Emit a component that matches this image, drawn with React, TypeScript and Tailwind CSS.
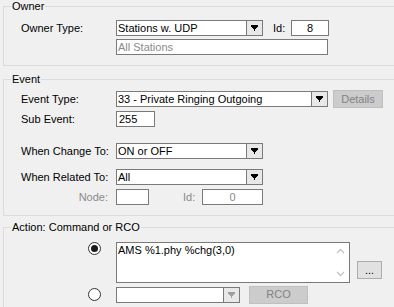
import React from "react";

const Arrow = ({ color = "#000" }: { color?: string }) => (
  <svg width="7" height="6" viewBox="0 0 7 6" shapeRendering="crispEdges">
    <rect x="0" y="0" width="7" height="2" fill={color} />
    <rect x="1" y="2" width="5" height="1" fill={color} />
    <rect x="2" y="3" width="3" height="1" fill={color} />
    <rect x="3" y="4" width="1" height="2" fill={color} />
  </svg>
);

const Combo = ({ w, text, disabled }: { w: string; text: string; disabled?: boolean }) => (
  <div className={`${w} h-[16px] flex border border-[#7a7a7a] bg-white`}>
    <div className="flex-1 pl-[1px] leading-[14px] whitespace-nowrap overflow-hidden">{text}</div>
    <div className="w-[16px] h-full border-l border-[#7a7a7a] bg-[#e8e8e8] flex items-center justify-center">
      <Arrow color={disabled ? "#a0a0a0" : "#000"} />
    </div>
  </div>
);

const Legend = ({ children }: { children: React.ReactNode }) => (
  <div className="absolute left-[7px] top-[-8px] px-[1px] bg-[#f0f0f0] leading-[14px]">{children}</div>
);

const Radio = ({ checked }: { checked?: boolean }) => (
  <div className="w-[13px] h-[13px] rounded-full border border-[#333333] bg-white flex items-center justify-center">
    {checked && <div className="w-[7px] h-[7px] rounded-full bg-[#1a1a1a]" />}
  </div>
);

export default function App() {
  return (
    <div
      className="w-[394px] h-[307px] bg-[#f0f0f0] overflow-hidden text-[11px] text-black flow-root"
      style={{ fontFamily: '"Liberation Sans", Arial, sans-serif' }}
    >
      {/* Owner */}
      <div className="relative mt-[6px] ml-[3px] w-[400px] h-[60px] border border-r-0 border-[#dcdcdc]">
        <Legend>Owner</Legend>
        <div className="pt-[13px] pl-[17px]">
          <div className="flex items-center h-[16px]">
            <div className="w-[95px]">Owner Type:</div>
            <Combo w="w-[147px]" text="Stations w. UDP" />
            <div className="ml-[10px] w-[18px]">Id:</div>
            <div className="w-[38px] h-[16px] border border-[#7a7a7a] bg-white text-center leading-[14px]">8</div>
          </div>
          <div className="flex mt-[3px] ml-[95px]">
            <div className="w-[212px] h-[16px] border border-[#7a7a7a] bg-white pl-[1px] leading-[14px] text-[#8a8a8a]">
              All Stations
            </div>
          </div>
        </div>
      </div>

      {/* Event */}
      <div className="relative mt-[13px] ml-[3px] w-[400px] h-[137px] border border-r-0 border-[#dcdcdc]">
        <Legend>Event</Legend>
        <div className="pt-[11px] pl-[17px]">
          <div className="flex items-center h-[16px]">
            <div className="w-[95px]">Event Type:</div>
            <Combo w="w-[212px]" text="33 - Private Ringing Outgoing" />
            <div className="ml-[5px] w-[50px] h-[18px] border border-[#bfbfbf] bg-[#cccccc] text-[#838383] flex items-center justify-center">
              Details
            </div>
          </div>
          <div className="flex items-center h-[16px] mt-[4px]">
            <div className="w-[95px]">Sub Event:</div>
            <div className="w-[39px] h-[16px] border border-[#7a7a7a] bg-white pl-[2px] leading-[14px]">255</div>
          </div>
          <div className="flex items-center h-[16px] mt-[16px]">
            <div className="w-[95px]">When Change To:</div>
            <Combo w="w-[147px]" text="ON or OFF" />
          </div>
          <div className="flex items-center h-[16px] mt-[10px]">
            <div className="w-[95px]">When Related To:</div>
            <Combo w="w-[147px]" text="All" />
          </div>
          <div className="flex items-center h-[16px] mt-[4px] text-[#8a8a8a]">
            <div className="w-[95px] text-right pr-[8px]">Node:</div>
            <div className="w-[33px] h-[16px] border border-[#7a7a7a] bg-white" />
            <div className="ml-[34px] w-[19px]">Id:</div>
            <div className="w-[61px] h-[16px] border border-[#7a7a7a] bg-white text-center leading-[14px]">0</div>
          </div>
        </div>
      </div>

      {/* Action */}
      <div className="relative mt-[11px] ml-[3px] w-[400px] h-[120px] border border-r-0 border-[#dcdcdc]">
        <Legend>Action: Command or RCO</Legend>
        <div className="pt-[14px] pl-[17px]">
          <div className="flex items-end">
            <div className="w-[95px] self-start pl-[67px]">
              <Radio checked />
            </div>
            <div className="w-[234px] h-[41px] border border-[#7a7a7a] bg-white flex">
              <div className="flex-1 pl-[1px] leading-[14px]">AMS %1.phy %chg(3,0)</div>
              <div className="w-[17px] h-full flex flex-col items-center justify-between py-[5px]">
                <svg width="9" height="6" viewBox="0 0 9 6">
                  <path d="M1 5 L4.5 1.5 L8 5" stroke="#c4c4c4" strokeWidth="1.3" fill="none" />
                </svg>
                <svg width="9" height="6" viewBox="0 0 9 6">
                  <path d="M1 1 L4.5 4.5 L8 1" stroke="#c4c4c4" strokeWidth="1.3" fill="none" />
                </svg>
              </div>
            </div>
            <div className="ml-[7px] mb-[4px] w-[25px] h-[18px] border border-[#adadad] bg-[#e1e1e1] flex items-center justify-center leading-none">
              ...
            </div>
          </div>
          <div className="flex items-center mt-[3px] h-[17px]">
            <div className="w-[95px] pl-[67px]">
              <Radio />
            </div>
            <Combo w="w-[124px]" text="" disabled />
            <div className="ml-[9px] w-[59px] h-[18px] border border-[#bfbfbf] bg-[#cccccc] text-[#838383] flex items-center justify-center">
              RCO
            </div>
          </div>
        </div>
      </div>
    </div>
  );
}
